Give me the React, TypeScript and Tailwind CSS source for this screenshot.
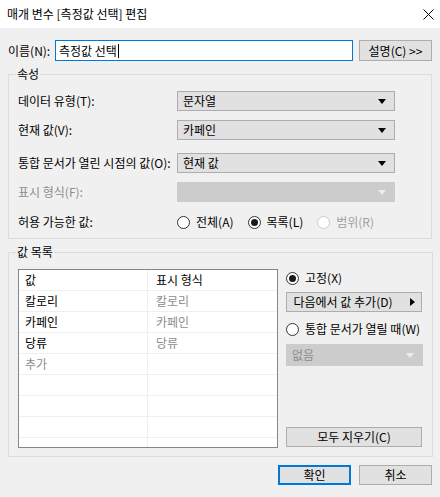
const font = { fontFamily: '"Noto Sans CJK KR", "Noto Sans", sans-serif' };

function Arrow({ disabled = false }: { disabled?: boolean }) {
  return (
    <svg width="8" height="5" viewBox="0 0 8 5" className="shrink-0">
      <polygon points="0,0 8,0 4,5" fill={disabled ? '#ececec' : '#000'} />
    </svg>
  );
}

function Select({ value, disabled = false, className = '' }: { value?: string; disabled?: boolean; className?: string }) {
  return (
    <div
      className={
        'flex items-center justify-between h-[20px] pl-[5px] pr-[8px] border ' +
        (disabled ? 'bg-[#cccccc] border-[#cccccc] text-[#8d8d8d] ' : 'bg-[#e1e1e1] border-[#adadad] text-black ') +
        className
      }
    >
      <span className="leading-none">{value}</span>
      <Arrow disabled={disabled} />
    </div>
  );
}

function Radio({ checked = false, disabled = false, label }: { checked?: boolean; disabled?: boolean; label: string }) {
  return (
    <div className={'flex items-center gap-[6px] ' + (disabled ? 'text-[#a0a0a0]' : 'text-black')}>
      <span
        className={
          'flex items-center justify-center w-[13px] h-[13px] rounded-full border bg-white ' +
          (disabled ? 'border-[#cccccc]' : 'border-[#333333]')
        }
      >
        {checked && <span className="w-[7px] h-[7px] rounded-full bg-[#1a1a1a]" />}
      </span>
      <span className="leading-none">{label}</span>
    </div>
  );
}

function Button({ children, primary = false, className = '' }: { children: React.ReactNode; primary?: boolean; className?: string }) {
  return (
    <div
      className={
        'flex items-center justify-center h-[20px] bg-[#e1e1e1] ' +
        (primary ? 'border-2 border-[#0078d7] ' : 'border border-[#adadad] ') +
        className
      }
    >
      {children}
    </div>
  );
}

const rows = [
  { v: '값', f: '표시 형식', head: true },
  { v: '칼로리', f: '칼로리' },
  { v: '카페인', f: '카페인' },
  { v: '당류', f: '당류' },
  { v: '추가', f: '', add: true },
  { v: '', f: '' },
  { v: '', f: '' },
  { v: '', f: '' },
  { v: '', f: '' },
];

export default function App() {
  return (
    <div className="w-[440px] h-[497px] bg-[#f0f0f0] text-[12px] text-black overflow-hidden" style={font}>
      {/* Title bar */}
      <div className="h-[28px] bg-white flex items-center justify-between pl-[7px] pr-[6px]">
        <span className="leading-none">매개 변수 [측정값 선택] 편집</span>
        <svg width="11" height="11" viewBox="0 0 11 11">
          <path d="M0.5 0.5 L10.5 10.5 M10.5 0.5 L0.5 10.5" stroke="#000" strokeWidth="1" />
        </svg>
      </div>

      <div className="px-[8px]">
        {/* Name row */}
        <div className="flex items-center mt-[12px] h-[21px]">
          <span className="w-[47px] leading-none">이름(N):</span>
          <div className="w-[298px] h-[21px] bg-white border border-[#0078d7] flex items-center pl-[3px]">
            <span className="leading-none">측정값 선택</span>
            <span className="w-px h-[14px] bg-black ml-[1px]" />
          </div>
          <Button className="ml-[6px] w-[73px] h-[21px]">설명(C) &gt;&gt;</Button>
        </div>

        {/* 속성 */}
        <fieldset className="mt-[5px] border border-[#dcdcdc] pl-[9px] pb-[6px]">
          <legend className="-ml-[2px] px-[1px] leading-[16px]">속성</legend>
          <div className="flex items-center h-[20px] mt-[9px]">
            <span className="w-[159px]">데이터 유형(T):</span>
            <Select value="문자열" className="w-[218px]" />
          </div>
          <div className="flex items-center h-[20px] mt-[9px]">
            <span className="w-[159px]">현재 값(V):</span>
            <Select value="카페인" className="w-[218px]" />
          </div>
          <div className="flex items-center h-[20px] mt-[13px]">
            <span className="w-[159px] whitespace-nowrap">통합 문서가 열린 시점의 값(O):</span>
            <Select value="현재 값" className="w-[218px]" />
          </div>
          <div className="flex items-center h-[20px] mt-[9px]">
            <span className="w-[159px] text-[#8d8d8d]">표시 형식(F):</span>
            <Select disabled className="w-[218px]" />
          </div>
          <div className="flex items-center h-[20px] mt-[10px]">
            <span className="w-[159px]">허용 가능한 값:</span>
            <div className="flex items-center gap-[14px]">
              <Radio label="전체(A)" />
              <Radio label="목록(L)" checked />
              <Radio label="범위(R)" disabled />
            </div>
          </div>
        </fieldset>

        {/* 값 목록 */}
        <fieldset className="mt-[5px] border border-[#dcdcdc] pl-[9px] pr-[9px] pb-[8px]">
          <legend className="-ml-[2px] px-[1px] leading-[16px]">값 목록</legend>
          <div className="flex mt-[9px] gap-[8px]">
            <div className="w-[260px] h-[179px] bg-white border border-[#82878f] overflow-hidden">
              {rows.map((r, i) => (
                <div key={i} className="flex h-[21px] border-b border-[#efefef]">
                  <div
                    className={
                      'w-[129px] shrink-0 border-r border-[#efefef] pl-[6px] flex items-center ' +
                      (r.add ? 'text-[#8d8d8d]' : 'text-black')
                    }
                  >
                    {r.v}
                  </div>
                  <div className={'pl-[8px] flex items-center ' + (r.head ? 'text-black' : 'text-[#8d8d8d]')}>{r.f}</div>
                </div>
              ))}
            </div>

            <div className="flex flex-col w-[137px] h-[179px]">
              <div className="h-[18px] flex items-center">
                <Radio label="고정(X)" checked />
              </div>
              <Button className="mt-[5px] w-[136px]">
                <span>다음에서 값 추가(D)</span>
                <svg width="5" height="8" viewBox="0 0 5 8" className="ml-[17px]">
                  <polygon points="0,0 5,4 0,8" fill="#000" />
                </svg>
              </Button>
              <div className="h-[18px] flex items-center mt-[8px]">
                <Radio label="통합 문서가 열릴 때(W)" />
              </div>
              <Select disabled value="없음" className="mt-[6px] w-[137px] h-[22px]" />
              <Button className="mt-auto mb-px w-[136px]">모두 지우기(C)</Button>
            </div>
          </div>
        </fieldset>

        {/* Dialog buttons */}
        <div className="flex justify-end gap-[8px] mt-[8px]">
          <Button primary className="w-[73px]">확인</Button>
          <Button className="w-[73px]">취소</Button>
        </div>
      </div>
    </div>
  );
}
